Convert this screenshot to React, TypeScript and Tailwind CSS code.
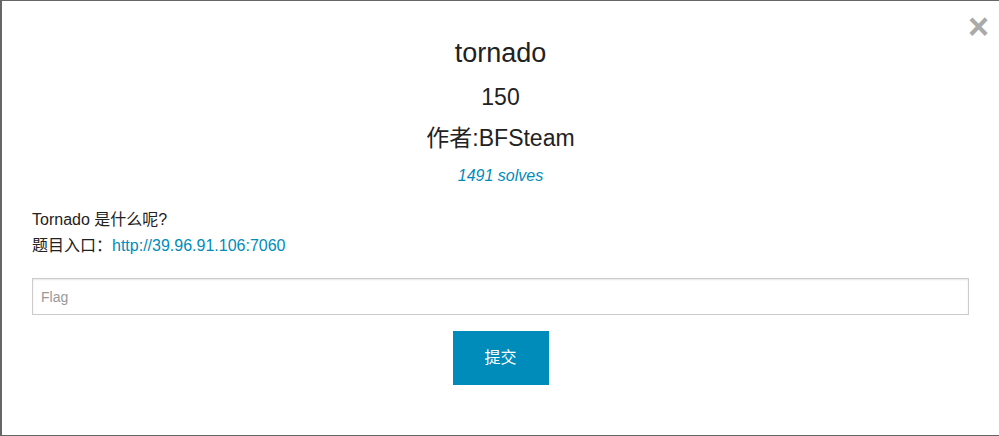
export default function App() {
  return (
    <div
      className="relative h-[436px] w-[999px] overflow-hidden border-t border-b border-l-2 border-[#666] bg-white text-[#222]"
      style={{ fontFamily: '"Liberation Sans", "Noto Sans CJK SC", sans-serif' }}
    >
      <span className="absolute right-[10px] top-[8px] text-[36px] font-bold leading-none text-[#aaa]">×</span>
      <div className="px-[30px] pt-[36px]">
        <div className="flex flex-col items-center text-center">
          <h2 className="text-[27px] leading-[32px]">tornado</h2>
          <div className="mt-[14px] text-[23px] leading-[28px]">150</div>
          <div className="mt-[13px] text-[23px] leading-[28px]">作者:BFSteam</div>
          <div className="mt-[15px] text-[16px] italic leading-[18px] text-[#008cba]">1491 solves</div>
        </div>
        <div className="mt-[22px] text-[16px] leading-[26px]">
          <p>Tornado 是什么呢?</p>
          <p>
            题目入口：<a className="text-[#008cba]">http://39.96.91.106:7060</a>
          </p>
        </div>
        <div className="mt-[19px]">
          <input
            placeholder="Flag"
            className="h-[37px] w-full border border-[#ccc] px-[8px] text-[14px] shadow-[inset_0_1px_2px_rgba(0,0,0,0.1)] outline-none placeholder:text-[#999]"
          />
        </div>
        <div className="mt-[16px] flex justify-center">
          <button className="h-[54px] w-[96px] bg-[#008cba] text-[16px] text-white">提交</button>
        </div>
      </div>
    </div>
  );
}
